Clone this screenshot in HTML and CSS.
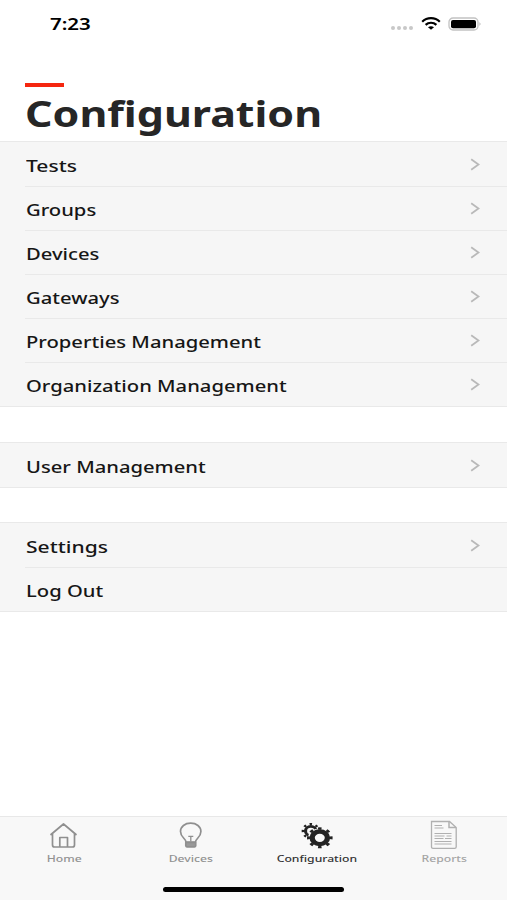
FILE: index.html
```html
<!DOCTYPE html>
<html lang="en">
<head>
<meta charset="utf-8">
<title>Configuration</title>
<link rel="stylesheet" href="styles.css">
</head>
<body>
<div class="screen">
  <header class="status">
    <span class="time">7:23</span>
    <div class="indicators">
      <span class="dots"><i></i><i></i><i></i><i></i></span>
      <svg class="wifi" width="20" height="13" viewBox="0 0 20 13" fill="none" stroke="#000" stroke-width="2.2">
        <path d="M1.200 4.700C6 0 14 0 18.800 4.700M4.600 7.900C7.600 5 12.400 5 15.400 7.900"/>
        <path d="M7 10.300Q10 8 13 10.300L10 12.800Z" fill="#000" stroke="none"/>
      </svg>
      <svg class="battery" width="34" height="14" viewBox="0 0 34 14">
        <rect x="1" y="1" width="29" height="12" rx="4" fill="#fff" stroke="#c2c2c2" stroke-width="1.300"/>
        <rect x="3" y="3" width="25" height="8.300" rx="2" fill="#000"/>
        <path d="M31.600 5Q33.400 7 31.600 9Z" fill="#999"/>
      </svg>
    </div>
  </header>
  <div class="heading">
    <div class="accent"></div>
    <h1><span>Configuration</span></h1>
  </div>
  <main>
    <ul class="group">
      <li><span class="label short">Tests</span><svg class="chevron" viewBox="0 0 10 13"><path d="M1.200 1.200L8.500 6.500L1.200 11.800"/></svg></li>
      <li><span class="label">Groups</span><svg class="chevron" viewBox="0 0 10 13"><path d="M1.200 1.200L8.500 6.500L1.200 11.800"/></svg></li>
      <li><span class="label">Devices</span><svg class="chevron" viewBox="0 0 10 13"><path d="M1.200 1.200L8.500 6.500L1.200 11.800"/></svg></li>
      <li><span class="label">Gateways</span><svg class="chevron" viewBox="0 0 10 13"><path d="M1.200 1.200L8.500 6.500L1.200 11.800"/></svg></li>
      <li><span class="label">Properties Management</span><svg class="chevron" viewBox="0 0 10 13"><path d="M1.200 1.200L8.500 6.500L1.200 11.800"/></svg></li>
      <li><span class="label">Organization Management</span><svg class="chevron" viewBox="0 0 10 13"><path d="M1.200 1.200L8.500 6.500L1.200 11.800"/></svg></li>
    </ul>
    <ul class="group">
      <li><span class="label">User Management</span><svg class="chevron" viewBox="0 0 10 13"><path d="M1.200 1.200L8.500 6.500L1.200 11.800"/></svg></li>
    </ul>
    <ul class="group">
      <li><span class="label short">Settings</span><svg class="chevron" viewBox="0 0 10 13"><path d="M1.200 1.200L8.500 6.500L1.200 11.800"/></svg></li>
      <li><span class="label">Log Out</span></li>
    </ul>
  </main>
  <footer>
    <nav class="tabs">
      <a class="tab">
        <svg width="32" height="32" viewBox="0 0 32 32" fill="none" stroke="#8f8f8f" stroke-width="1.700" stroke-linejoin="round" stroke-linecap="round">
          <path d="M4 15.500L16.500 5L29 15.500M5.500 14.500V26Q5.500 28 7.500 28H25.500Q27.500 28 27.500 26V14.500M12.800 28V18.500H20.500V28"/>
        </svg>
        <span>Home</span>
      </a>
      <a class="tab">
        <svg width="32" height="32" viewBox="0 0 32 32" fill="none" stroke="#8f8f8f" stroke-width="1.700" stroke-linejoin="round">
          <path d="M12 23C12 19.500 6.500 18.500 6.500 12.500C6.500 7.500 11 4.200 16.700 4.200S26.900 7.500 26.900 12.500C26.900 18.500 21.500 19.500 21.500 23Z"/>
          <path d="M14.300 17.300H19.300M16.800 17.500V22.500" stroke-width="1.300"/>
          <path d="M11.800 23.500H21.700V26.800Q21.500 27.800 20.500 27.800H13Q12 27.800 11.800 26.800Z" fill="#999"/>
        </svg>
        <span>Devices</span>
      </a>
      <a class="tab active">
        <svg width="32" height="32" viewBox="0 0 32 32" fill="none" stroke="#232323">
          <g transform="translate(9.800 12) scale(1.130 1)">
            <circle r="4.700" stroke-width="2.800"/>
            <circle r="7" stroke-width="2.200" pathLength="16" stroke-dasharray="0.800 1.200" stroke-dashoffset="0.400"/>
          </g>
          <g transform="translate(18.800 18.800) scale(1.220 1)">
            <circle r="9.600" fill="#f8f8f8" stroke="none"/>
            <circle r="6.300" stroke-width="4.400"/>
            <circle r="9.300" stroke-width="2.400" pathLength="16" stroke-dasharray="0.800 1.200" stroke-dashoffset="0.400"/>
          </g>
        </svg>
        <span>Configuration</span>
      </a>
      <a class="tab reports">
        <svg width="32" height="32" viewBox="0 0 32 32" fill="none" stroke="#b0b0b0">
          <path d="M3.500 2.500H21.500L28.200 8.500V28Q28.200 29.300 26.700 29.300H5Q3.500 29.300 3.500 28Z" stroke-width="1.300"/>
          <path d="M21 2.500V8.500H28" stroke-width="1.500"/>
          <path d="M6.500 6.500H14M6.500 9H15.500M6.500 14.500H23.500M6.500 17H16.500M18.500 17H23.500M6.500 19.500H15.500M17 19.500H23.500M6.500 22.500H23.500M6.500 25H23.500" stroke-width="1.200"/>
        </svg>
        <span>Reports</span>
      </a>
    </nav>
    <div class="home-indicator"></div>
  </footer>
</div>
</body>
</html>
```
FILE: styles.css
```css
* { box-sizing: border-box; }
body { margin: 0; background: #fff; font-family: "Noto Sans", "Open Sans", sans-serif; }
.screen { width: 507px; height: 900px; display: flex; flex-direction: column; overflow: hidden; }
.status { height: 82px; padding: 12px 25px 0 50px; display: flex; justify-content: space-between; align-items: flex-start; }
.time { font-size: 15.5px; line-height: 24px; font-weight: 600; transform: scaleX(1.32); transform-origin: left; }
.indicators { display: flex; align-items: center; height: 23px; }
.dots { display: flex; gap: 2px; margin: 8px 8px 0 0; }
.dots i { width: 4px; height: 4px; border-radius: 50%; background: #c8c8c8; }
.wifi { margin-right: 7px; }
.heading { height: 59px; padding-left: 25px; }
.accent { width: 39px; height: 4px; margin-top: 1px; background: #f5260f; }
h1 { margin: 0; color: #262626; font-size: 35px; line-height: 53px; font-weight: 700; }
h1 span { display: inline-block; transform: scaleX(1.227); transform-origin: left; }
main { flex: 1; }
.group { list-style: none; margin: 0 0 35px; padding: 0 0 0 25px; background: #f6f6f6; border-top: 1px solid #e9e9e9; border-bottom: 1px solid #e9e9e9; }
.group + .group { margin-bottom: 34px; }
.group li { height: 44px; padding: 0 27px 0 1px; display: flex; align-items: center; justify-content: space-between; }
.group li + li { border-top: 1px solid #e9e9e9; }
.label { color: #161616; font-size: 16px; line-height: 24px; font-weight: 500; margin-top: 3px; transform: scaleX(1.263); transform-origin: left; white-space: nowrap; }
.label.short { transform: scaleX(1.315); }
.chevron { width: 10px; height: 13px; fill: none; stroke: #b9b9b9; stroke-width: 1.8; }
footer { height: 84px; background: #f8f8f8; border-top: 1px solid #e8e8e8; }
.tabs { display: grid; grid-template-columns: repeat(4, 1fr); height: 70px; }
.tab { display: flex; flex-direction: column; align-items: center; padding-top: 2px; color: #929292; }
.tab span { font-size: 9.5px; line-height: 15px; font-weight: 500; transform: translateX(0.5px) scaleX(1.28); }
.tab.active { color: #333; }
.tab.reports { color: #a5a5a5; }
.home-indicator { width: 181px; height: 5px; margin: 0 auto; border-radius: 3px; background: #000; }
```
